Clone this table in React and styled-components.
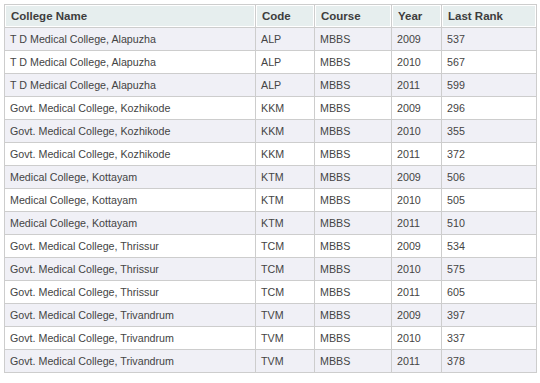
import styled, { createGlobalStyle } from "styled-components"

const GlobalStyle = createGlobalStyle`
body{
  margin:0;
  padding:4px;
  background:#fff;
  font-family:"Liberation Sans", Arial, sans-serif;
}
`

const columns = [
  { title: "College Name", width: 250 },
  { title: "Code", width: 58 },
  { title: "Course", width: 76 },
  { title: "Year", width: 49 },
  { title: "Last Rank", width: 94 },
]

const colleges = [
  { name: "T D Medical College, Alapuzha", code: "ALP", ranks: [537, 567, 599] },
  { name: "Govt. Medical College, Kozhikode", code: "KKM", ranks: [296, 355, 372] },
  { name: "Medical College, Kottayam", code: "KTM", ranks: [506, 505, 510] },
  { name: "Govt. Medical College, Thrissur", code: "TCM", ranks: [534, 575, 605] },
  { name: "Govt. Medical College, Trivandrum", code: "TVM", ranks: [397, 337, 378] },
]

const rows = colleges.flatMap(c =>
  c.ranks.map((rank, i) => ({ name: c.name, code: c.code, course: "MBBS", year: 2009 + i, rank }))
)

export default function App(){
  return(
    <>
      <GlobalStyle/>
      <RankTable cellSpacing="1">
        <colgroup>
          {columns.map(col => <col key={col.title} style={{width: col.width}}/>)}
        </colgroup>
        <thead>
          <tr>
            {columns.map(col => <HeadCell key={col.title}>{col.title}</HeadCell>)}
          </tr>
        </thead>
        <tbody>
          {rows.map((r, i) => (
            <Row key={i} odd={i % 2 === 0}>
              <Cell>{r.name}</Cell>
              <Cell>{r.code}</Cell>
              <Cell>{r.course}</Cell>
              <Cell>{r.year}</Cell>
              <Cell>{r.rank}</Cell>
            </Row>
          ))}
        </tbody>
      </RankTable>
    </>
  )
}

const RankTable=styled.table`
width:533px;
table-layout:fixed;
border-collapse:separate;
border-spacing:1px;
background-color:#cdcdcd;
font-family:"Liberation Sans", Arial, sans-serif;
font-size:10.7px;
text-align:left;
`
const HeadCell=styled.th`
background-color:#e6eeee;
border:1px solid #fff;
height:22px;
padding:0 5px;
box-sizing:border-box;
color:#3d3d3d;
font-size:11.5px;
font-weight:bold;
text-align:left;
vertical-align:middle;
`
const Row=styled.tr.withConfig({shouldForwardProp:p=>p!=="odd"})`
td{
  background-color:${props=>props.odd ? "#f0f0f6" : "#fff"};
}
`
const Cell=styled.td`
height:22px;
padding:0 5px;
box-sizing:border-box;
color:#444;
vertical-align:middle;
white-space:nowrap;
overflow:hidden;
`
